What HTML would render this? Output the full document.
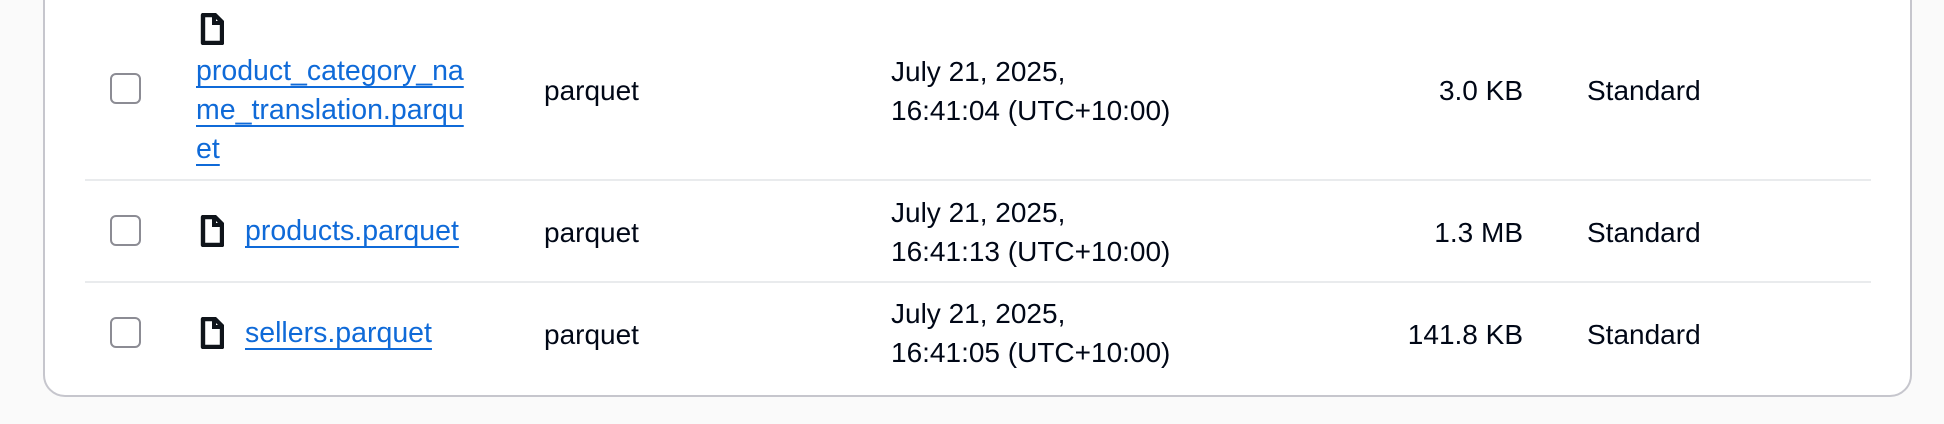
<!DOCTYPE html>
<html><head><meta charset="utf-8"><style>
html,body{margin:0;padding:0;width:1944px;height:424px;background:#fafafa;overflow:hidden;font-family:"Liberation Sans",sans-serif;color:#000716}
.card{position:absolute;left:43px;top:-30px;width:1869px;height:427px;background:#fff;border:2px solid #c6c6cd;border-radius:22px;box-sizing:border-box}
.sep{position:absolute;left:85px;width:1786px;height:2px;background:#e9ebed}
.cb{position:absolute;left:110px;width:27px;height:27px;border:2px solid #8c8c94;border-radius:6px}
.ic{position:absolute;left:200px;width:24px;height:32px}
.t{position:absolute;font-size:28px;line-height:39px;white-space:nowrap}
a{color:#0f6ad8;text-decoration:underline;text-decoration-thickness:2px;text-underline-offset:6px}
.r{text-align:right}
</style></head><body>
<div class="card"></div>
<div class="sep" style="top:179px"></div>
<div class="sep" style="top:281px"></div>

<svg class="ic" style="top:13px" viewBox="0 0 24 32"><path d="M3 2H15L22 9V30H3Z" fill="none" stroke="#0f141a" stroke-width="4.4" stroke-linejoin="round"/><path d="M14 2V10H22" fill="none" stroke="#0f141a" stroke-width="4"/></svg>
<svg class="ic" style="top:215px" viewBox="0 0 24 32"><path d="M3 2H15L22 9V30H3Z" fill="none" stroke="#0f141a" stroke-width="4.4" stroke-linejoin="round"/><path d="M14 2V10H22" fill="none" stroke="#0f141a" stroke-width="4"/></svg>
<svg class="ic" style="top:317px" viewBox="0 0 24 32"><path d="M3 2H15L22 9V30H3Z" fill="none" stroke="#0f141a" stroke-width="4.4" stroke-linejoin="round"/><path d="M14 2V10H22" fill="none" stroke="#0f141a" stroke-width="4"/></svg>

<div class="cb" style="top:73px"></div>
<div class="cb" style="top:215px"></div>
<div class="cb" style="top:317px"></div>

<div class="t" style="left:196px;top:52px;font-size:28.5px"><a>product_category_na</a><br><a>me_translation.parqu</a><br><a>et</a></div>
<div class="t" style="left:245px;top:212px;font-size:28.5px"><a>products.parquet</a></div>
<div class="t" style="left:245px;top:314px;font-size:28.5px"><a>sellers.parquet</a></div>

<div class="t" style="left:544px;top:71px">parquet</div>
<div class="t" style="left:544px;top:213px">parquet</div>
<div class="t" style="left:544px;top:315px">parquet</div>

<div class="t" style="left:891px;top:52px">July 21, 2025,<br>16:41:04 (UTC+10:00)</div>
<div class="t" style="left:891px;top:193px">July 21, 2025,<br>16:41:13 (UTC+10:00)</div>
<div class="t" style="left:891px;top:294px">July 21, 2025,<br>16:41:05 (UTC+10:00)</div>

<div class="t r" style="right:421px;top:71px">3.0 KB</div>
<div class="t r" style="right:421px;top:213px">1.3 MB</div>
<div class="t r" style="right:421px;top:315px">141.8 KB</div>

<div class="t" style="left:1587px;top:71px">Standard</div>
<div class="t" style="left:1587px;top:213px">Standard</div>
<div class="t" style="left:1587px;top:315px">Standard</div>
</body></html>
